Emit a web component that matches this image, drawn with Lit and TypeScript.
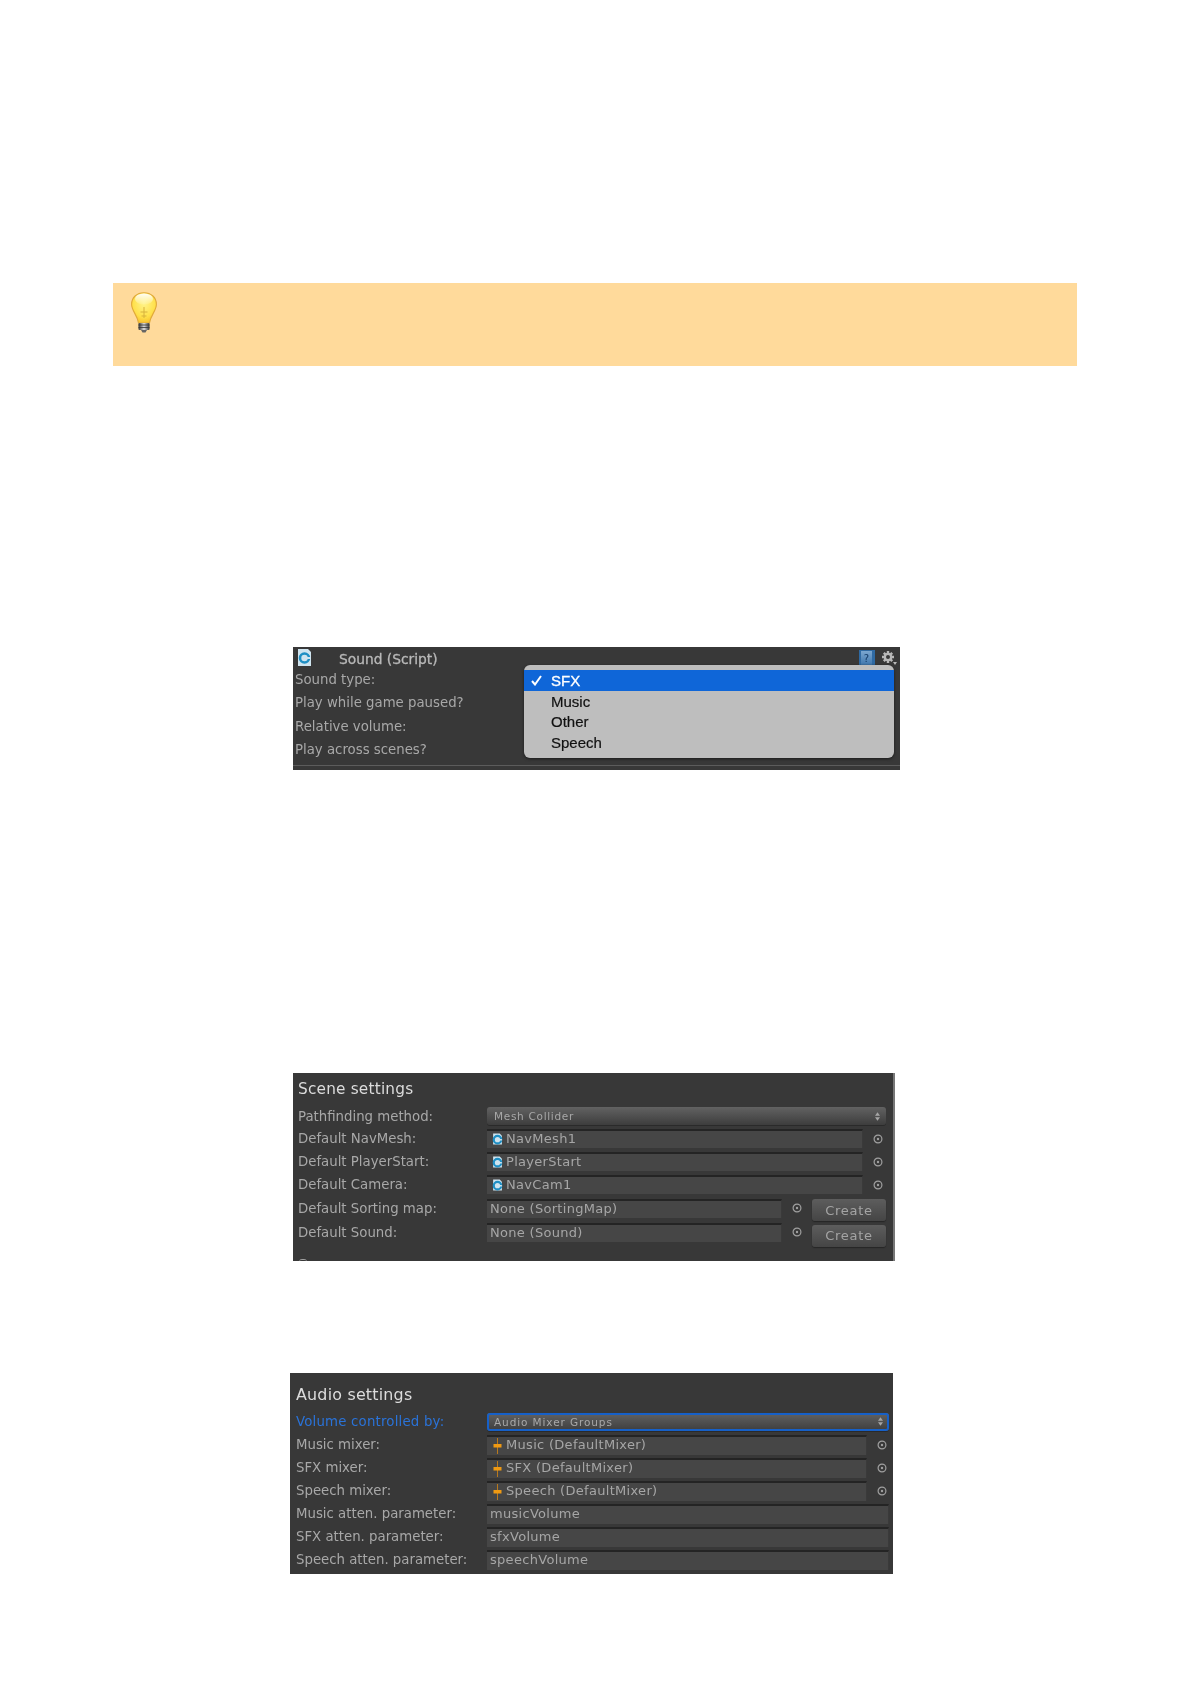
import { LitElement, html, css, svg } from "lit";
import { customElement } from "lit/decorators.js";

const target = html`<svg class="target" viewBox="0 0 10 10"><circle cx="5" cy="5" r="3.9" fill="none" stroke="#a0a0a0" stroke-width="1.2"/><circle cx="5" cy="5" r="1.2" fill="#a0a0a0"/></svg>`;
const scriptIcon = html`<svg class="obj" viewBox="0 0 10 10"><path d="M1 0h6l2 2v8H1z" fill="#cfe4ef"/><circle cx="5" cy="5.6" r="3.4" fill="none" stroke="#1f8fc4" stroke-width="2"/><path d="M6 5h3v1.4H6z" fill="#cfe4ef"/></svg>`;
const mixerIcon = html`<svg class="obj mixer" viewBox="0 0 10 16"><path d="M5 0v16" stroke="#b9791c" stroke-width="1"/><rect x="1" y="6" width="8" height="3.500" fill="#f09a12"/></svg>`;

const bulb = svg`<svg class="bulb" viewBox="0 0 26 41">
  <defs>
    <radialGradient id="glass" cx="50%" cy="35%" r="65%"><stop offset="0" stop-color="#fff38a"/><stop offset=".7" stop-color="#ffe04a"/><stop offset="1" stop-color="#f7c230"/></radialGradient>
    <linearGradient id="shine" x1="0" y1="0" x2="0" y2="1"><stop offset="0" stop-color="#fff" stop-opacity=".95"/><stop offset="1" stop-color="#fff" stop-opacity=".1"/></linearGradient>
    <linearGradient id="base" x1="0" y1="0" x2="1" y2="0"><stop offset="0" stop-color="#333"/><stop offset=".5" stop-color="#ddd"/><stop offset="1" stop-color="#333"/></linearGradient>
  </defs>
  <path d="M13 .7C5.800.7.6 5.700.6 12.300c0 6.700 5.600 10.200 6.900 18.700h11c1.300-8.500 6.900-12 6.900-18.700C25.400 5.700 20.200.7 13 .7z" fill="url(#glass)" stroke="#e0a93a" stroke-width="1.100"/>
  <ellipse cx="13" cy="7" rx="9" ry="5.500" fill="url(#shine)"/>
  <path d="M13 15v11M9.500 20h7M10.500 24h5" stroke="#d7b23c" stroke-width="1" fill="none"/>
  <rect x="7.500" y="31" width="11" height="7" rx="1" fill="url(#base)"/>
  <path d="M7.500 33h11M7.500 35.500h11" stroke="#333" stroke-width=".8"/>
  <path d="M10 38h6l-1.500 2.500h-3z" fill="#666"/>
</svg>`;

@customElement("app-root")
export class AppRoot extends LitElement {
  static styles = css`
    :host { display: block; height: 1684px; background: #fff; overflow: hidden; font-family: "DejaVu Sans", sans-serif; }
    .page { display: flex; flex-direction: column; align-items: flex-start; padding-top: 283px; }
    .callout { margin-left: 113px; width: 964px; height: 83px; background: #ffda9b; padding: 9px 0 0 18px; box-sizing: border-box; }
    .bulb { display: block; width: 26px; height: 41px; }
    .panel { background: #383838; color: #a8a8a8; box-sizing: border-box; overflow: hidden; position: relative; filter: blur(0.4px); font-size: 13px; letter-spacing: 0.3px; white-space: nowrap; }
    .p1 { margin: 281px 0 0 293px; width: 607px; height: 123px; padding-left: 2px; }
    .p2 { margin: 303px 0 0 293px; width: 602px; height: 188px; padding: 0 7px 0 5px; border-right: 2px solid #777; }
    .p3 { margin: 112px 0 0 290px; width: 603px; height: 201px; padding: 0 4px 0 6px; }
    .head { height: 21px; display: flex; align-items: center; }
    .head .script { width: 15px; height: 17px; margin: 0 0 0 2px; }
    .head .name { margin: 2px 0 0 27px; font-size: 13.800px; letter-spacing: 0; color: #b8b8b8; -webkit-text-stroke: 0.3px #b8b8b8; }
    .head .tools { margin-left: auto; display: flex; gap: 6px; margin-right: 3px; }
    .title { color: #dcdcdc; font-size: 15.300px; letter-spacing: 0.2px; display: flex; align-items: center; box-sizing: border-box; }
    .p2 .title { height: 32px; }
    .p3 .title { height: 37px; padding-top: 5px; font-size: 15.900px; }
    .row { display: flex; align-items: center; height: 23px; }
    .p1 .row { height: 23.300px; font-size: 13.300px; letter-spacing: 0; }
    .p2 .row.first { height: 22px; }
    .p2 .row.short { height: 24px; }
    .p2 .field { height: 19px; }
    .p2 .popup { letter-spacing: 0.7px; }
    .divider { margin: 4px 0 0 -2px; height: 1px; background: #5c5c5c; }
    .label { width: 189px; flex: none; font-size: 13.300px; letter-spacing: 0; }
    .p3 .label { width: 191px; }
    .label.focus { color: #2a73d9; letter-spacing: 0.2px; }
    .popup { flex: 1; height: 18px; box-sizing: border-box; border-radius: 3px; background: linear-gradient(#626262, #3d3d3d); box-shadow: 0 1px 0 #2a2a2a; color: #a8a8a8; font-size: 10.500px; letter-spacing: 0.9px; display: flex; align-items: center; justify-content: space-between; padding: 0 6px 0 7px; }
    .popup.focus { outline: 2px solid #1660c8; outline-offset: -2px; }
    .arrows { width: 5px; height: 9px; }
    .field { flex: 1; min-width: 0; height: 20px; box-sizing: border-box; background: #464646; border-top: 2px solid #242424; border-right: 1px solid #3a3a3a; display: flex; align-items: center; gap: 3px; padding: 0 0 2px 3px; color: #a6a6a6; }
    .field.ref { padding-left: 5px; }
    .obj { width: 11px; height: 12px; flex: none; }
    .obj.mixer { width: 11px; height: 16px; margin-bottom: -2px; }
    .target { width: 10px; height: 10px; flex: none; margin: 0 3px 0 10px; }
    .p2 .short .target { margin-right: 0; }
    .p3 .target { margin-right: 2px; }
    .button { width: 74px; height: 22px; margin: 4px 0 0 10px; flex: none; box-sizing: border-box; border-radius: 3px; background: linear-gradient(#5d5d5d, #454545); box-shadow: 0 1px 1px #262626; color: #a4a4a4; display: flex; align-items: center; justify-content: center; letter-spacing: 0.7px; }
    .button.low { margin-top: 7px; }
    .fragment { margin: 15px 0 0 1px; width: 8px; height: 3px; box-sizing: border-box; border-top: 1px solid #a0a0a0; border-radius: 4px 4px 0 0; }
    .menu { position: absolute; left: 231px; top: 18px; width: 370px; height: 93px; box-sizing: border-box; padding-top: 5px; border-radius: 6px; background: #bebebe; box-shadow: 0 1px 3px #1c1c1c; color: #111; font: 15px "Liberation Sans", sans-serif; letter-spacing: 0; }
    .item { height: 20.500px; padding-left: 27px; display: flex; align-items: center; -webkit-text-stroke: 0.2px #111; }
    .item.on { position: relative; background: #0f66d8; color: #fff; -webkit-text-stroke: 0.3px #fff; height: 21px; }
    .check { position: absolute; left: 7px; top: 5px; width: 11px; height: 11px; }
  `;

  private settingsRow(label: string, body: unknown, cls = "", labelCls = "") {
    return html`<div class="row ${cls}"><span class="label ${labelCls}">${label}</span>${body}</div>`;
  }
  private popup(text: string, focus = false) {
    return html`<div class="popup ${focus ? "focus" : ""}"><span>${text}</span>
      <svg class="arrows" viewBox="0 0 6 10"><path d="M3 0l3 4H0zM3 10L0 6h6z" fill="#a6a6a6"/></svg></div>`;
  }
  private refField(icon: unknown, text: string) {
    return html`<div class="field ref">${icon}<span>${text}</span></div>${target}`;
  }
  private noneField(text: string, low = false) {
    return html`<div class="field"><span>${text}</span></div>${target}<div class="button ${low ? "low" : ""}">Create</div>`;
  }
  private textField(text: string) {
    return html`<div class="field"><span>${text}</span></div>`;
  }

  render() {
    return html`<div class="page">
      <div class="callout">${bulb}</div>

      <div class="panel p1">
        <div class="head">
          <svg class="script" viewBox="0 0 15 17"><path d="M1 0h10l3 3v14H1z" fill="#cfe4ef"/><circle cx="7.500" cy="9" r="4.500" fill="none" stroke="#1f8fc4" stroke-width="2.600"/><path d="M9 8h5v2H9z" fill="#cfe4ef"/></svg>
          <span class="name">Sound (Script)</span>
          <span class="tools">
            <svg width="16" height="16" viewBox="0 0 16 16"><defs><linearGradient id="hlp" x1="0" y1="0" x2="0" y2="1"><stop offset="0" stop-color="#7ba6cf"/><stop offset="1" stop-color="#3f77ae"/></linearGradient></defs><rect width="16" height="16" fill="#2f6aa3"/><rect x="2" y="1" width="11" height="14" fill="url(#hlp)"/><text x="7.500" y="12" font-size="10" font-family="DejaVu Sans" fill="#123a66" text-anchor="middle">?</text></svg>
            <svg width="16" height="16" viewBox="0 0 16 16"><g stroke="#b8b8b8" stroke-width="2.400"><path d="M7 1v12M1 7h12M2.800 2.800l8.400 8.400M11.200 2.800l-8.400 8.400"/></g><circle cx="7" cy="7" r="4.300" fill="#b8b8b8"/><circle cx="7" cy="7" r="2" fill="#383838"/><path d="M12 12h4l-2 3z" fill="#b8b8b8"/></svg>
          </span>
        </div>
        <div class="row">Sound type:</div>
        <div class="row">Play while game paused?</div>
        <div class="row">Relative volume:</div>
        <div class="row">Play across scenes?</div>
        <div class="divider"></div>
        <div class="menu">
          <div class="item on"><svg class="check" viewBox="0 0 11 11"><path d="M1 6l3 3.500L10 1" fill="none" stroke="#fff" stroke-width="2"/></svg>SFX</div>
          <div class="item">Music</div>
          <div class="item">Other</div>
          <div class="item">Speech</div>
        </div>
      </div>

      <div class="panel p2">
        <div class="title">Scene settings</div>
        ${this.settingsRow("Pathfinding method:", this.popup("Mesh Collider"), "first")}
        ${this.settingsRow("Default NavMesh:", this.refField(scriptIcon, "NavMesh1"))}
        ${this.settingsRow("Default PlayerStart:", this.refField(scriptIcon, "PlayerStart"))}
        ${this.settingsRow("Default Camera:", this.refField(scriptIcon, "NavCam1"))}
        ${this.settingsRow("Default Sorting map:", this.noneField("None (SortingMap)"), "short")}
        ${this.settingsRow("Default Sound:", this.noneField("None (Sound)", true), "short")}
        <div class="fragment"></div>
      </div>

      <div class="panel p3">
        <div class="title">Audio settings</div>
        ${this.settingsRow("Volume controlled by:", this.popup("Audio Mixer Groups", true), "", "focus")}
        ${this.settingsRow("Music mixer:", this.refField(mixerIcon, "Music (DefaultMixer)"))}
        ${this.settingsRow("SFX mixer:", this.refField(mixerIcon, "SFX (DefaultMixer)"))}
        ${this.settingsRow("Speech mixer:", this.refField(mixerIcon, "Speech (DefaultMixer)"))}
        ${this.settingsRow("Music atten. parameter:", this.textField("musicVolume"))}
        ${this.settingsRow("SFX atten. parameter:", this.textField("sfxVolume"))}
        ${this.settingsRow("Speech atten. parameter:", this.textField("speechVolume"))}
      </div>
    </div>`;
  }
}
